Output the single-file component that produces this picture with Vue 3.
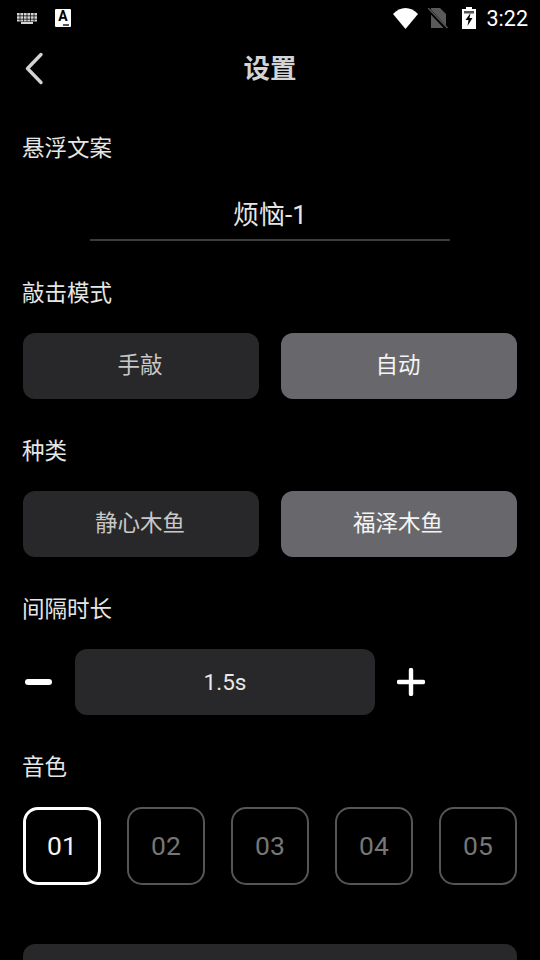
<script setup>
const modes = [
  { text: '手敲', on: false },
  { text: '自动', on: true },
]
const kinds = [
  { text: '静心木鱼', on: false },
  { text: '福泽木鱼', on: true },
]
const tones = ['01', '02', '03', '04', '05']
</script>

<template>
  <div class="page">
    <div class="status">
      <div class="status-left">
        <svg class="kbd" width="20" height="11" viewBox="0 0 20 11">
          <path d="M0 0h20v2.500H0zM0 3.200h20v2.600H0zM0 6.500h20v2H0zM4 9h12v2H4z" fill="#d4d4d4" />
          <path d="M3 0v8.500M6.500 0v8.500M10 0v8.500M13.500 0v8.500M17 0v8.500" stroke="#000" stroke-width=".7" />
        </svg>
        <div class="a-icon">
          <span class="a-letter">A</span>
          <i class="a-small"></i>
        </div>
      </div>
      <div class="status-right">
        <svg class="wifi" width="25" height="21" viewBox="0 0 25 21">
          <path d="M0 6C7 -2 18 -2 25 6L12.500 21z" fill="#fff" />
        </svg>
        <svg class="sim" width="20" height="20" viewBox="0 0 20 20">
          <path d="M3 0h9l6 6v14H3z" fill="#5a5a5a" />
          <path d="M-1 0 18 20" stroke="#000" stroke-width="3.500" />
          <path d="M0 0 19.500 20" stroke="#5a5a5a" stroke-width="1.400" />
        </svg>
        <svg class="battery" width="14" height="22" viewBox="0 0 14 22">
          <path d="M4 0h6v2h4v20H0V2h4z" fill="#fff" />
          <path d="M2 4h10v2.500H2z" fill="#555" />
          <path d="M8.500 6 3.500 13H6.500L5.500 19 10.500 11H7.500z" fill="#000" />
        </svg>
        <span class="clock">3:22</span>
      </div>
    </div>

    <header class="nav">
      <svg class="back" width="24" height="36" viewBox="0 0 24 36">
        <path d="M19 3.500 5.500 17.500 19 31.500" fill="none" stroke="#d4d4d4" stroke-width="3.400" stroke-linecap="round" stroke-linejoin="round" />
      </svg>
      <h1 class="title">设置</h1>
    </header>

    <div class="content">
      <div class="label first">悬浮文案</div>
      <div class="input-row"><div class="input">烦恼-1</div></div>

      <div class="label mode-label">敲击模式</div>
      <div class="pair">
        <div v-for="m in modes" :key="m.text" class="choice" :class="{ on: m.on }">{{ m.text }}</div>
      </div>

      <div class="label">种类</div>
      <div class="pair">
        <div v-for="k in kinds" :key="k.text" class="choice" :class="{ on: k.on }">{{ k.text }}</div>
      </div>

      <div class="label">间隔时长</div>
      <div class="stepper">
        <div class="minus"></div>
        <div class="value">1.5s</div>
        <svg class="plus" width="28" height="28" viewBox="0 0 28 28">
          <path d="M2 14H26M14 2V26" stroke="#fff" stroke-width="4.400" stroke-linecap="round" />
        </svg>
      </div>

      <div class="label">音色</div>
      <div class="tones">
        <div v-for="(t, i) in tones" :key="t" class="tone" :class="{ active: i === 0 }">{{ t }}</div>
      </div>

      <div class="bottom"></div>
    </div>
  </div>
</template>

<style scoped>
.page {
  width: 540px;
  height: 960px;
  overflow: hidden;
  background: #000;
  color: #eee;
  font-family: Roboto, "Noto Sans CJK SC", sans-serif;
}
.status {
  height: 36px;
  box-sizing: border-box;
  padding: 0 12px 0 17px;
  display: flex;
  align-items: center;
  justify-content: space-between;
}
.status-left {
  display: flex;
  align-items: center;
  gap: 18px;
}
.a-icon {
  width: 16px;
  height: 18px;
  background: #fff;
  border-radius: 1px;
  display: flex;
  flex-direction: column;
  align-items: center;
  color: #000;
  position: relative;
}
.a-letter {
  font-size: 14px;
  line-height: 15px;
  font-weight: 700;
}
.a-small {
  position: absolute;
  right: 2px;
  bottom: 1px;
  width: 6px;
  height: 2px;
  background: #555;
}
.status-right {
  display: flex;
  align-items: center;
}
.wifi {
  margin-right: 10px;
}
.sim {
  margin-right: 14px;
}
.battery {
  margin-right: 11px;
}
.clock {
  color: #fff;
  font-size: 21.500px;
}
.nav {
  height: 66px;
  display: flex;
  align-items: center;
  justify-content: center;
  position: relative;
}
.back {
  position: absolute;
  left: 22px;
  top: 15px;
}
.title {
  margin: 0;
  color: #d4d4d4;
  font-size: 26.500px;
  font-weight: 700;
  line-height: 34px;
}
.content {
  padding: 0 23px;
}
.label {
  font-size: 22.500px;
  line-height: 30px;
  color: #e6e6e6;
  margin: 37px 0 0 -1px;
}
.label.first {
  margin-top: 31px;
}
.input-row {
  display: flex;
  justify-content: center;
  margin-top: 31px;
}
.input {
  width: 360px;
  height: 47px;
  box-sizing: border-box;
  border-bottom: 2px solid #3c3c3c;
  text-align: center;
  font-size: 26px;
  line-height: 42px;
  color: #e6e6e6;
}
.pair {
  display: grid;
  grid-template-columns: 1fr 1fr;
  gap: 22px;
  margin-top: 25px;
}
.choice {
  height: 66px;
  box-sizing: border-box;
  padding: 0 2px 6px 0;
  border-radius: 12px;
  background: #28282a;
  display: flex;
  align-items: center;
  justify-content: center;
  font-size: 22.500px;
  color: #c8c8c8;
}
.choice.on {
  background: #68686c;
  color: #f4f4f4;
}
.stepper {
  display: flex;
  align-items: center;
  margin-top: 25px;
}
.minus {
  width: 27px;
  height: 6px;
  margin-left: 2px;
  border-radius: 3px;
  background: #fff;
}
.value {
  width: 300px;
  height: 66px;
  margin-left: 23px;
  border-radius: 12px;
  background: #28282a;
  display: flex;
  align-items: center;
  justify-content: center;
  font-size: 22.500px;
  color: #e8e8e8;
}
.plus {
  margin-left: 22px;
}
.tones {
  display: flex;
  justify-content: space-between;
  margin-top: 25px;
}
.tone {
  width: 78px;
  height: 78px;
  box-sizing: border-box;
  padding-bottom: 2px;
  border: 2px solid #555;
  border-radius: 15px;
  display: flex;
  align-items: center;
  justify-content: center;
  font-size: 26.500px;
  color: #767676;
}
.tone.active {
  border: 3px solid #fff;
  color: #f2f2f2;
}
.bottom {
  height: 66px;
  margin-top: 59px;
  border-radius: 12px;
  background: #28282a;
}
</style>
